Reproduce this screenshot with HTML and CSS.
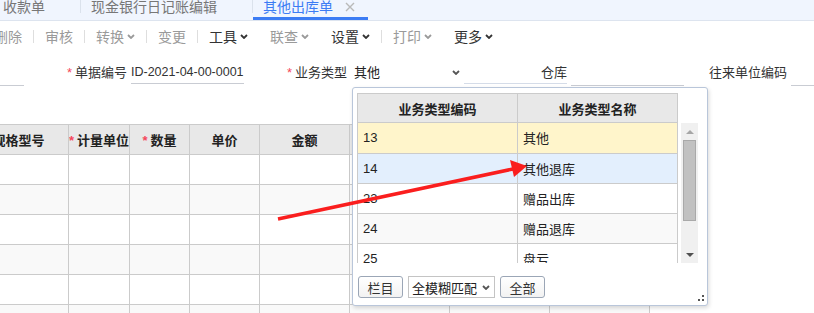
FILE: index.html
```html
<!DOCTYPE html>
<html lang="zh-CN">
<head>
    <meta charset="UTF-8">
    <meta name="viewport" content="width=device-width, initial-scale=1.0">
    <title>其他出库单</title>
    <link rel="stylesheet" href="styles.css">
</head>
<body>

    <!-- Tabs -->
    <div class="tabbar">
        <div class="tab"><span>收款单</span><svg class="tab-close" viewBox="0 0 10 10"><path d="M1 1l8 8M9 1l-8 8"/></svg></div>
        <span class="tab-sep"></span>
        <div class="tab"><span>现金银行日记账编辑</span><svg class="tab-close" viewBox="0 0 10 10"><path d="M1 1l8 8M9 1l-8 8"/></svg></div>
        <span class="tab-sep"></span>
        <div class="tab active"><span>其他出库单</span><svg class="tab-close" viewBox="0 0 10 10"><path d="M1 1l8 8M9 1l-8 8"/></svg></div>
    </div>

    <!-- Toolbar -->
    <div class="toolbar">
        <span class="tool">删除</span>
        <span class="tool-sep"></span>
        <span class="tool">审核</span>
        <span class="tool-sep"></span>
        <span class="tool">转换<svg class="caret" viewBox="0 0 8 5"><path d="M1 1l3 3 3-3"/></svg></span>
        <span class="tool-sep"></span>
        <span class="tool">变更</span>
        <span class="tool-sep"></span>
        <span class="tool on">工具<svg class="caret" viewBox="0 0 8 5"><path d="M1 1l3 3 3-3"/></svg></span>
        <span class="tool">联查<svg class="caret" viewBox="0 0 8 5"><path d="M1 1l3 3 3-3"/></svg></span>
        <span class="tool on">设置<svg class="caret" viewBox="0 0 8 5"><path d="M1 1l3 3 3-3"/></svg></span>
        <span class="tool-sep"></span>
        <span class="tool">打印<svg class="caret" viewBox="0 0 8 5"><path d="M1 1l3 3 3-3"/></svg></span>
        <span class="tool on">更多<svg class="caret" viewBox="0 0 8 5"><path d="M1 1l3 3 3-3"/></svg></span>
    </div>

    <!-- Header fields -->
    <div class="form-row">
        <div class="field">
            <label class="field-label">单据日期</label>
            <div class="field-input lower"></div>
        </div>
        <div class="field">
            <label class="field-label"><span class="req">*</span>单据编号</label>
            <div class="field-input code">ID-2021-04-00-0001</div>
        </div>
        <div class="field">
            <label class="field-label"><span class="req">*</span>业务类型</label>
            <div class="field-input select">
                <span>其他</span>
                <svg class="caret" viewBox="0 0 8 5"><path d="M1 1l3 3 3-3"/></svg>
            </div>
        </div>
        <div class="field">
            <label class="field-label lined">仓库</label>
            <div class="field-input lower"></div>
        </div>
        <div class="field">
            <label class="field-label">往来单位编码</label>
            <div class="field-input lower"></div>
        </div>
    </div>

    <!-- Detail grid -->
    <table class="grid">
        <colgroup>
            <col style="width: 100px"><col style="width: 60px"><col style="width: 60px"><col style="width: 70px">
            <col style="width: 90px"><col style="width: 100px"><col style="width: 100px"><col style="width: 100px">
        </colgroup>
        <thead>
            <tr>
                <th>规格型号</th>
                <th><span class="req">*</span>计量单位</th>
                <th><span class="req">*</span>数量</th>
                <th>单价</th>
                <th>金额</th>
                <th>税率</th>
                <th>税额</th>
                <th>价税合计</th>
            </tr>
        </thead>
        <tbody>
            <tr><td></td><td></td><td></td><td></td><td></td><td></td><td></td><td></td></tr>
            <tr><td></td><td></td><td></td><td></td><td></td><td></td><td></td><td></td></tr>
            <tr><td></td><td></td><td></td><td></td><td></td><td></td><td></td><td></td></tr>
            <tr><td></td><td></td><td></td><td></td><td></td><td></td><td></td><td></td></tr>
            <tr><td></td><td></td><td></td><td></td><td></td><td></td><td></td><td></td></tr>
            <tr><td></td><td></td><td></td><td></td><td></td><td></td><td></td><td></td></tr>
        </tbody>
    </table>

    <!-- Business type picker -->
    <div class="picker">
        <table class="pick-head">
            <tr><th>业务类型编码</th><th>业务类型名称</th></tr>
        </table>
        <div class="pick-body">
            <div class="pick-rows">
                <table class="pick-table">
                    <tr class="current"><td>13</td><td>其他</td></tr>
                    <tr class="hover"><td>14</td><td>其他退库</td></tr>
                    <tr><td>23</td><td>赠品出库</td></tr>
                    <tr class="alt"><td>24</td><td>赠品退库</td></tr>
                    <tr><td>25</td><td>盘亏</td></tr>
                </table>
            </div>
            <div class="scrollbar">
                <div class="sb-btn"><span class="tri-up"></span></div>
                <div class="sb-thumb"></div>
                <div class="sb-space"></div>
                <div class="sb-btn"><span class="tri-down"></span></div>
            </div>
        </div>
        <div class="pick-foot">
            <button class="btn">栏目</button>
            <div class="match">
                <span>全模糊匹配</span>
                <svg class="caret" viewBox="0 0 8 5"><path d="M1 1l3 3 3-3"/></svg>
            </div>
            <button class="btn">全部</button>
        </div>
        <svg class="grip" viewBox="0 0 6 6"><rect x="4" y="0" width="2" height="2"/><rect x="0" y="4" width="2" height="2"/><rect x="4" y="4" width="2" height="2"/></svg>
    </div>

    <!-- Annotation arrow -->
    <svg class="annotation" viewBox="0 0 814 313">
        <line x1="278" y1="219" x2="513" y2="169"/>
        <polygon points="527,166 514,177 510,160"/>
    </svg>

</body>
</html>
```

FILE: styles.css
```css
* {
    margin: 0;
    padding: 0;
    box-sizing: border-box;
}

body {
    font-family: "Liberation Sans", "Noto Sans CJK SC", sans-serif;
    font-size: 13px;
    color: #333;
    background-color: #fff;
    position: relative;
    height: 313px;
    overflow: hidden;
}

/* Tabs */
.tabbar {
    display: flex;
    align-items: flex-start;
    height: 21px;
    margin-left: -7px;
    background-color: #f0f5fe;
    border-bottom: 1px solid #dde4ef;
}

.tab {
    display: flex;
    align-items: flex-start;
    height: 20px;
    padding: 1px 13px 0 10px;
    font-size: 14px;
    line-height: 13px;
    color: #777;
    border-bottom: 3px solid transparent;
}

.tab.active {
    color: #3c7cf4;
    border-bottom-color: #3c7cf4;
}

.tab-close {
    width: 10px;
    height: 10px;
    margin: 1px 0 0 12px;
    stroke: #b9b9b9;
    stroke-width: 1.4;
    visibility: hidden;
}

.tab.active .tab-close {
    visibility: visible;
}

.tab-sep {
    width: 1px;
    height: 13px;
    background-color: #dbe2ec;
}

/* Toolbar */
.toolbar {
    display: flex;
    align-items: center;
    height: 30px;
    margin-left: -17px;
    font-size: 14px;
}

.tool {
    display: flex;
    align-items: center;
    padding: 0 11px;
    color: #9a9a9a;
}

.tool.on {
    color: #333;
}

.tool-sep {
    width: 1px;
    height: 13px;
    background-color: #dedede;
}

.caret {
    width: 8px;
    height: 5px;
    margin-left: 3px;
    fill: none;
    stroke: currentColor;
    stroke-width: 1.8;
}

/* Header fields */
.form-row {
    display: flex;
    height: 73px;
    padding-top: 11px;
    margin-left: -196px;
}

.field {
    display: flex;
    flex: none;
    width: 220px;
    height: 22px;
}

.field-label {
    width: 103px;
    line-height: 22px;
    text-align: right;
    white-space: nowrap;
    color: #333;
}

.field-label.lined {
    border-bottom: 1px solid #d5dce8;
}

.req {
    color: #f5475b;
    margin-right: 3px;
}

.field-input {
    width: 113px;
    margin-left: 4px;
    line-height: 21px;
    white-space: nowrap;
    color: #333;
    border-bottom: 1px solid #c9ccd3;
}

.field-input.code {
    font-size: 12.5px;
}

.field-input.lower {
    height: 24px;
}

.field-input.select {
    display: flex;
    align-items: center;
    justify-content: space-between;
    padding: 0 4px 2px 3px;
    border-bottom: none;
    color: #222;
}

.field-input.select .caret {
    color: #555;
}

/* Detail grid */
.grid {
    border-collapse: collapse;
    table-layout: fixed;
    margin-left: -32px;
}

.grid th,
.grid td {
    height: 30px;
    border: 1px solid #cbcbcb;
}

.grid th {
    background-color: #e8e8e8;
    font-weight: bold;
    color: #222;
    white-space: nowrap;
    overflow: hidden;
}

.grid tbody tr:nth-child(even) td {
    background-color: #f9f9f9;
}

/* Picker popup */
.picker {
    position: absolute;
    left: 352px;
    top: 87px;
    width: 356px;
    height: 219px;
    padding: 5px 0 0 4px;
    background-color: #fff;
    border: 1px solid #b9c6da;
    border-radius: 3px;
    box-shadow: 1px 2px 4px rgba(0, 0, 0, 0.15);
}

.pick-head,
.pick-table {
    width: 321px;
    border-collapse: collapse;
    table-layout: fixed;
}

.pick-head th {
    height: 29px;
    border: 1px solid #cbcbcb;
    background-color: #e8e8e8;
    font-weight: bold;
    color: #222;
}

.pick-body {
    display: flex;
    height: 140px;
}

.pick-rows {
    width: 321px;
    overflow: hidden;
}

.pick-table td {
    height: 30px;
    padding-left: 5px;
    border: 1px solid #cbcbcb;
    border-top: none;
    color: #222;
}

.pick-table td:first-child {
    width: 160px;
}

.pick-table tr.current td {
    background-color: #fff5cb;
}

.pick-table tr.hover td {
    background-color: #e3effd;
}

.pick-table tr.alt td {
    background-color: #f9f9f9;
}

.scrollbar {
    display: flex;
    flex-direction: column;
    width: 17px;
    margin-left: 3px;
    background-color: #f0f0f0;
}

.sb-btn {
    display: flex;
    align-items: center;
    justify-content: center;
    height: 17px;
}

.tri-up {
    border: 4px solid transparent;
    border-top: none;
    border-bottom: 4px solid #a6a6a6;
}

.tri-down {
    border: 4px solid transparent;
    border-bottom: none;
    border-top: 4px solid #505050;
}

.sb-thumb {
    height: 81px;
    margin: 0 2px;
    background-color: #c1c1c1;
    border: 1px solid #a9a9a9;
}

.sb-space {
    flex: 1;
}

.pick-foot {
    display: flex;
    align-items: center;
    gap: 5px;
    margin-top: 13px;
    padding-left: 1px;
}

.btn {
    width: 45px;
    height: 22px;
    font-family: inherit;
    font-size: 13px;
    color: #333;
    background: linear-gradient(#fff, #f2f2f2);
    border: 1px solid #9ba6b6;
    border-radius: 3px;
}

.match {
    display: flex;
    align-items: center;
    justify-content: space-between;
    width: 87px;
    height: 22px;
    padding: 0 4px 0 3px;
    color: #222;
    border: 1px solid #c4c4c4;
}

.match .caret {
    color: #555;
}

.grip {
    position: absolute;
    right: 3px;
    bottom: 4px;
    width: 6px;
    height: 6px;
    fill: #555;
}

/* Red annotation arrow */
.annotation {
    position: absolute;
    left: 0;
    top: 0;
    width: 814px;
    height: 313px;
    pointer-events: none;
}

.annotation line {
    stroke: #fa1e1e;
    stroke-width: 3.5;
}

.annotation polygon {
    fill: #fa1e1e;
}
```
